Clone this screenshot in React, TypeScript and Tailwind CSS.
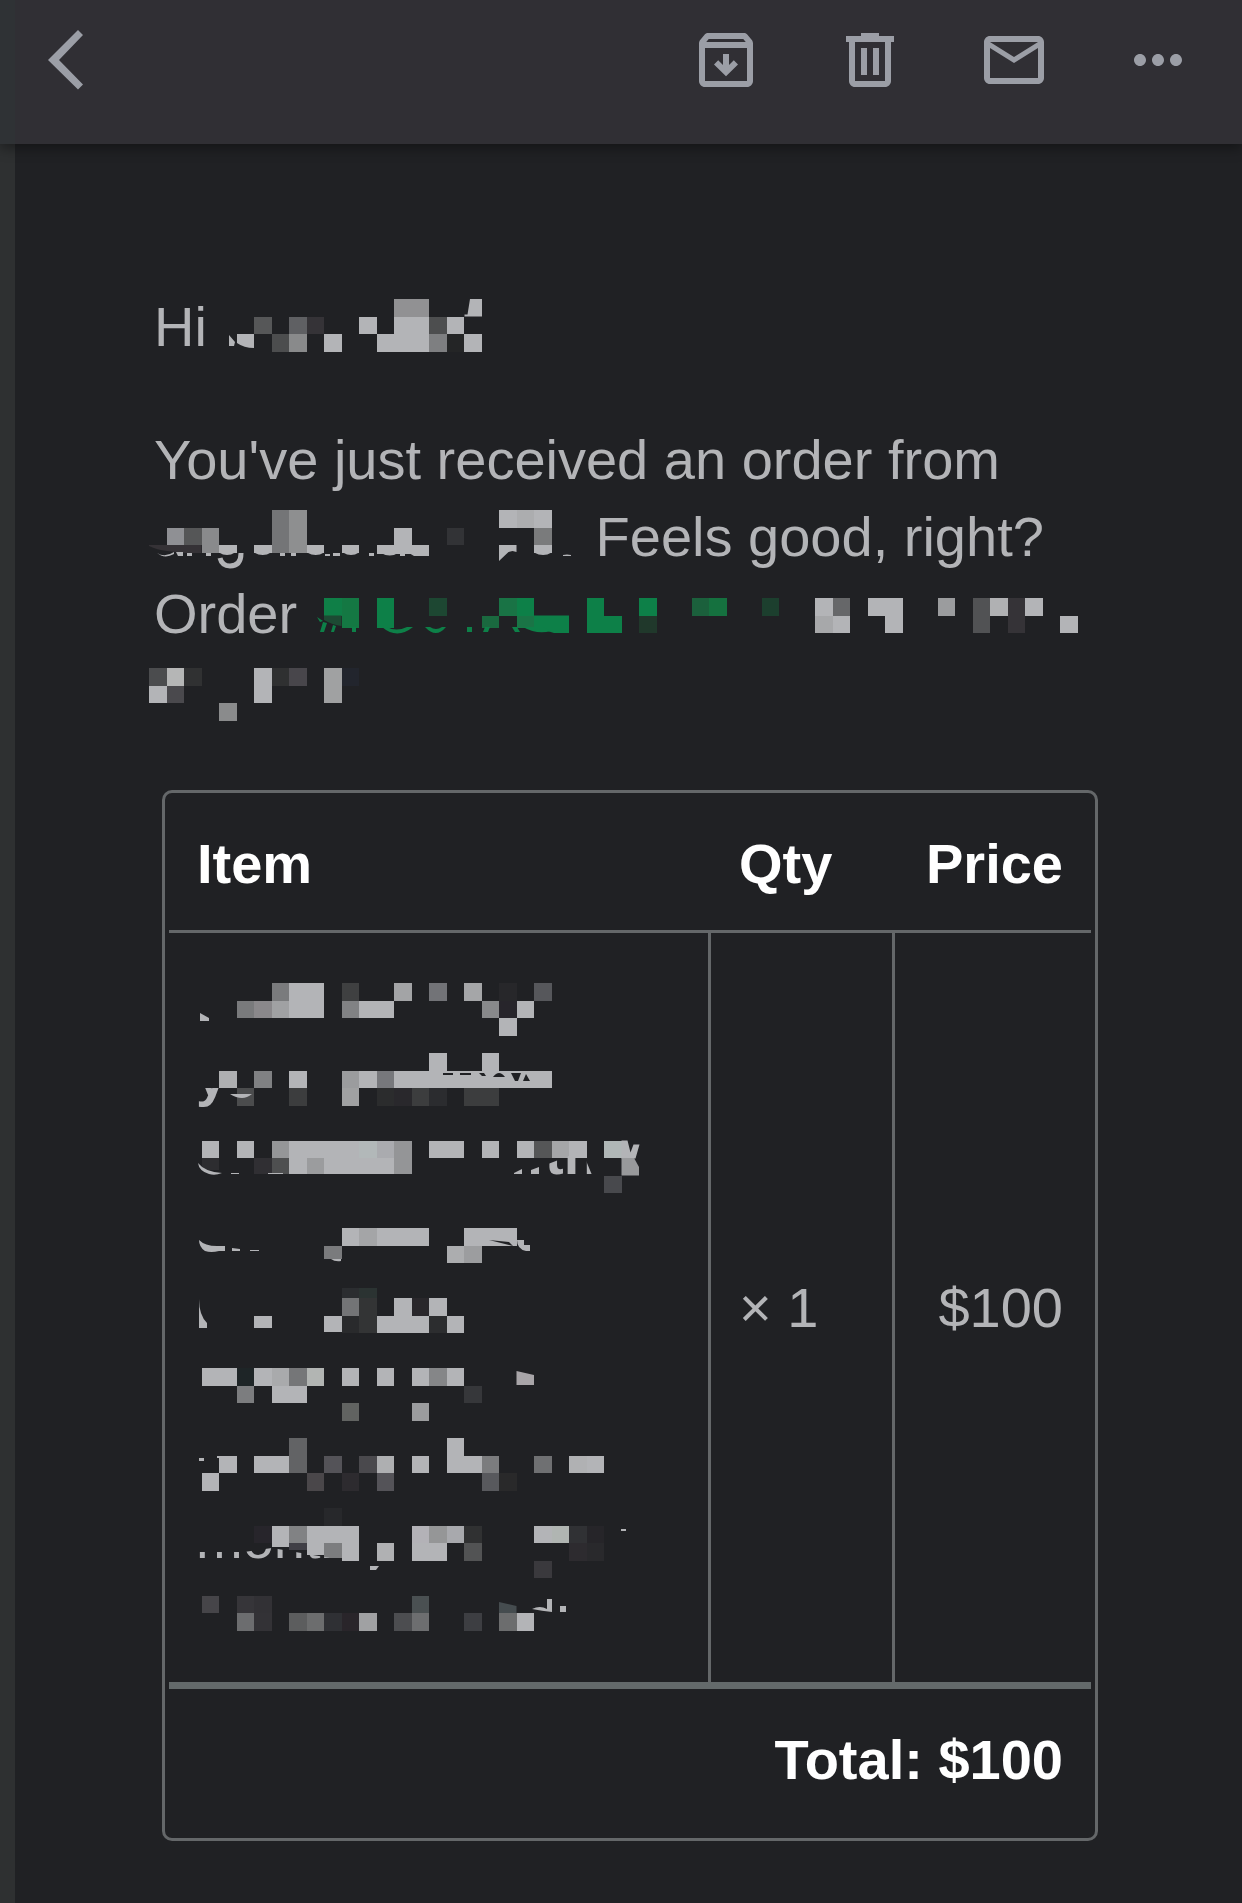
import type { ReactNode } from "react";

const CELL = 17.5;
const LIGHT = "#b3b4b7";
const GREEN = "#0d8048";

// column, row, colour, columns wide, rows high
type Cell = [number, number, string?, number?, number?];

interface MosaicProps {
	label: string;
	cells: Cell[];
	x: number;
	y: number;
	width: number;
	height?: number;
	block?: boolean;
	children?: ReactNode;
}

const Mosaic = ({ label, cells, x, y, width, height = 48, block, children }: MosaicProps) => (
	<svg
		role="img"
		aria-label={label}
		width={width}
		height={height}
		viewBox={`${x} ${y} ${width} ${height}`}
		className={block ? "block overflow-visible" : "inline align-baseline overflow-visible"}
	>
		{cells.map(([col, row, color = LIGHT, w = 1, h = 1]) => (
			<rect
				key={`${col}-${row}`}
				x={col * CELL}
				y={row * CELL}
				width={w * CELL}
				height={h * CELL}
				fill={color}
				shapeRendering="crispEdges"
			/>
		))}
		{children}
	</svg>
);

const nameCells: Cell[] = [
	[14, 0, "#919193", 2],
	[6, 1, "#565758"], [8, 1, "#5f6063"], [9, 1, "#353337"], [12, 1], [14, 1, LIGHT, 2, 2],
	[16, 1, "#4d4e4f"], [17, 1],
	[7, 2, "#4c4d4e"], [8, 2, "#898a8b"], [10, 2], [13, 2], [16, 2, "#7e7f81"],
	[17, 2, "#242526"], [18, 2],
];

const customerCells: Cell[] = [
	[7, 0, "#747577", 1, 2.45], [8, 0, "#8e8f90", 1, 2.45], [20, 0], [21, 0, "#acadaf"], [22, 0],
	[1, 1, "#8f9094"], [2, 1, "#555657"], [3, 1, "#898a8c", 1, 1.45], [14, 1], [17, 1, "#323336"],
	[22, 1, "#7a7b7c"],
	[4, 2, LIGHT, 1, 0.45], [6, 2, LIGHT, 1, 0.45], [9, 2, LIGHT, 1, 0.45],
	[11, 2, LIGHT, 1, 0.45], [13, 2, LIGHT, 3, 0.5], [22, 2, LIGHT, 1, 0.45],
];

const orderCells: Cell[] = [
	[10, 0, "#0f7f47"], [11, 0, "#147843"], [13, 0, GREEN, 1, 1.7], [16, 0, "#1d4732"],
	[20, 0, "#197345"], [21, 0, GREEN], [25, 0, GREEN, 1, 2], [28, 0, GREEN],
	[31, 0, "#1b603c"], [32, 0, "#15713f"], [35, 0, "#1c3f2e"],
	[11, 1, "#147843", 1, 0.7], [19, 1, "#1a693f", 1, 0.7], [21, 1, "#1a7446", 1, 0.7],
	[26, 1, GREEN], [28, 1, "#20382b"],
];

const dateCells: Cell[] = [
	[38, 0], [39, 0, "#666769"], [41, 0, LIGHT, 2], [45, 0, "#9b9c9e"],
	[47, 0, "#515254", 1, 2], [48, 0, "#b0b1b3"], [49, 0, "#353337", 1, 2], [50, 0],
	[38, 1, "#a7a8aa"], [39, 1], [42, 1], [52, 1],
];

const yearCells: Cell[] = [
	[0, 0, "#4b4c4e"], [1, 0, "#b5b6b6"], [2, 0, "#303132"], [6, 0, LIGHT, 1, 2],
	[7, 0, "#2f3031"], [8, 0, "#48464b"], [10, 0, "#a0a1a2", 1, 2], [11, 0, "#22252d"],
	[0, 1], [1, 1, "#4a494d"],
	[4, 2, "#8a8b8c"],
];

const itemCells: Cell[] = [
	[7, 0, "#7a7b7d"], [8, 0, LIGHT, 2, 2], [11, 0, "#3f4041"], [14, 0, "#a3a4a6"],
	[16, 0, "#727377"], [18, 0, "#a5a6a8"], [20, 0, "#27272a"], [22, 0, "#56575b"],
	[5, 1, "#797a7c"], [6, 1, "#8a888b"], [7, 1, "#a0a1a3"], [11, 1, "#818284"],
	[12, 1, LIGHT, 2], [19, 1, "#88898b"], [20, 1, "#27252b"], [21, 1],
	[20, 2],
	[16, 4], [19, 4],
	[4, 5, "#aeafb1"], [6, 5, "#808183"], [8, 5], [11, 5, "#9b9c9e"], [12, 5],
	[13, 5, "#77787c"], [14, 5, LIGHT, 9],
	[5, 6, "#4b4c4d"], [8, 6, "#3c3d3e"], [11, 6, "#a0a1a2"], [13, 6, "#2b2c2d"],
	[14, 6, "#29282c"], [15, 6, "#3c3d3e"], [16, 6, "#2b2c2f"], [18, 6, "#3c3d3e", 2],
	[3, 9], [5, 9], [7, 9, "#959698"], [8, 9, LIGHT, 4], [12, 9, "#b2b8b9"],
	[13, 9, "#aaabaf"], [14, 9, "#949597", 1, 1.9], [16, 9, LIGHT, 2], [19, 9], [21, 9],
	[22, 9, "#555657"], [23, 9, "#a5a6a8"], [24, 9], [26, 9, "#b0b7b7"],
	[3, 10, "#2d2d30", 1, 0.7], [6, 10, "#302f33", 1, 0.9], [7, 10, "#4e4f50", 1, 0.9],
	[8, 10, LIGHT, 1, 0.9], [9, 10, "#9b9c9e", 1, 0.9], [10, 10, LIGHT, 4, 0.9],
	[26, 11, "#48494d"],
	[11, 14], [12, 14, "#a4a5a7"], [13, 14, LIGHT, 3], [18, 14, LIGHT, 3],
	[10, 15, "#7a7b7d", 1, 0.75], [17, 15, "#acadaf"], [18, 15, "#9c9d9f"],
	[11, 17.4, "#2b2d30", 1, 0.6], [12, 17.4, "#2b3332", 1, 0.6],
	[11, 18, "#737476"], [12, 18, "#333435", 1, 2], [14, 18], [15, 18, "#29272b"], [16, 18],
	[6, 19, LIGHT, 1, 0.7], [10, 19, LIGHT, 1, 0.95], [11, 19, "#292a2c"],
	[13, 19, LIGHT, 3], [16, 19, "#2c2d2f"], [17, 19],
	[3, 22, LIGHT, 2], [5, 22, "#1e2527"], [6, 22], [7, 22, "#a9aaac"], [8, 22, "#757678"],
	[9, 22, "#b2b5b3"], [11, 22], [13, 22], [15, 22], [16, 22, "#858688"], [17, 22],
	[5, 23, "#7c7d7f"], [7, 23, LIGHT, 2], [18, 23, "#36373a"],
	[11, 24, "#616361"], [15, 24, "#9b9c9e"],
	[8, 26, "#626365", 1, 2], [17, 26, LIGHT, 1, 2],
	[4, 27], [6, 27, LIGHT, 2], [10, 27, "#545358"], [12, 27, "#4a494d"], [13, 27, "#aeafb1"],
	[15, 27], [18, 27], [19, 27, "#7b7c7e"], [22, 27, "#6f7072"], [24, 27, "#b0b1b3"], [25, 27],
	[3, 28], [9, 28, "#4a474a"], [11, 28, "#2d2b2f"], [13, 28, "#545358"],
	[19, 28, "#58595d"], [20, 28, "#29292a"],
	[10, 30, "#27282b"],
	[6, 31, "#27252b"], [7, 31, LIGHT, 1, 1.25], [8, 31, "#818284"], [9, 31, LIGHT, 3],
	[15, 31, "#b3b2b7"], [16, 31, "#959697"], [17, 31, "#a8a9ad"], [18, 31, "#303132"],
	[22, 31], [23, 31, "#b0b5b2"], [24, 31, "#303134"], [25, 31, "#262529"],
	[8, 32, "#403f46", 1, 0.4], [9, 32, LIGHT, 1, 0.7], [10, 32, "#7c7d7f", 1, 0.85], [11, 32],
	[13, 32, "#b0b1b3"], [15, 32, LIGHT, 2], [18, 32, "#525354"], [24, 32, "#2d2b2f"],
	[25, 32, "#29292c"],
	[22, 33, "#3a393d"],
	[3, 35, "#464549"], [5, 35, "#363539"], [6, 35, "#323135"], [15, 35, "#4a5052"],
	[5, 36, "#6c6d6f"], [6, 36, "#333236"], [8, 36, "#5c5d5e"], [9, 36, "#6c6d6e"],
	[10, 36, "#2f3034"], [11, 36, "#29252a"], [12, 36, "#a0a1a3"], [14, 36, "#4c4d50"],
	[15, 36, "#6d6e70"], [18, 36, "#3d3e42"], [20, 36, "#6c6d6e"], [21, 36],
];

const ItemName = () => (
	<Mosaic label="Hidden item name" cells={itemCells} x={48} y={-22} width={484} height={693} block>
		<clipPath id="item-line-2">
			<path d="M47 105h24v26H47z" />
		</clipPath>
		<clipPath id="item-line-3">
			<path d="M399 181l34-13 10 24h-44z" />
		</clipPath>
		<clipPath id="item-line-8">
			<path d="M47 569h48l28-4 76 13H47z" />
		</clipPath>
		<g fill={LIGHT}>
			<path d="M51 30l9 5v3h-9z" />
			<path d="M81 111h22q-5 4-10 4-6 0-12-4z" />
			<path d="M49 180q7 9 24 10-7 3-13 1-10-3-11-11z" />
			<path d="M82 190h8v1h-8zM119 190h15v1h-15zM365 190l8-4v5h-8zM382 187l8-3v7h-8z" />
			<path d="M472.5 157.5h6l3 12 3-8h6l-4 14h-14z" />
			<path d="M472.5 175H485l5 9v8.500h-17.500z" fill="#98999b" />
			<path d="M50 257q6 6 18 6h8v5h-6q-8 2-14 0-6-4-6-11zM83 265l8 1v2h-8zM101 267h9v1h-9z" />
			<path d="M182 276h10v2q-6 1-10-2z" />
			<path d="M368 257h7v5h6v6h-4q-9-2-9-11z" />
			<path d="M50 316q0 16 8 24v5h-8z" />
			<path d="M367.500 388l17.500 4v10h-17.500z" fill="#a8a5a8" />
			<path d="M50 475h5v3h-5zM68 473h18v2H68z" />
			<path d="M472 546h5v2h-5zM221 583h9l-3 4h-6z" />
			<path d="M350 619l17.500 4v7H350z" fill="#454c4f" />
			<path d="M383 626q8-4 15 0v-10h5v13q-10-1-20-3zM411 623h6v6h-6z" />
		</g>
		<g fill="#202124">
			<path d="M294 90h10v2h-10zM311 90h11v2h-11zM330 90h5l2 3h-4zM344 94q6-8 12 0zM362 90h10l-3 8h-3zM374 98l3-7 4 7z" />
			<path d="M340 257l20 2 4 4z" />
		</g>
		<g fill={LIGHT} fontSize={56}>
			<text x={47} y={112} fontWeight={700} clipPath="url(#item-line-2)">y</text>
			<text x={396} y={191} fontWeight={700} clipPath="url(#item-line-3)">th</text>
			<text x={47} y={575} clipPath="url(#item-line-8)">month</text>
		</g>
	</Mosaic>
);

const toolbarActions = [
	{
		label: "Archive",
		path: "M20.54 5.23l-1.39-1.68C18.88 3.210 18.470 3 18 3H6c-.47 0-.88.21-1.16.55L3.460 5.230C3.170 5.570 3 6.020 3 6.500V19c0 1.100.9 2 2 2h14c1.100 0 2-.9 2-2V6.500c0-.48-.17-.93-.46-1.270zM6.240 5h11.520l.83 1H5.420l.82-1zM5 19V8h14v11H5zm8-9h-2v3.700l-1.600-1.600L8 13.500l4 3.900 4-3.900-1.400-1.400-1.600 1.600z",
	},
	{
		label: "Delete",
		path: "M15 4V3H9v1H4v2h1v13c0 1.100.9 2 2 2h10c1.100 0 2-.9 2-2V6h1V4h-5zm2 15H7V6h10v13zM9 8h2v9H9zm4 0h2v9h-2z",
	},
	{
		label: "Mark as unread",
		path: "M20 4H4c-1.100 0-2 .9-2 2v12c0 1.100.9 2 2 2h16c1.100 0 2-.9 2-2V6c0-1.100-.9-2-2-2zm0 14H4V8l8 5 8-5v10zm-8-7L4 6h16l-8 5z",
	},
	{
		label: "More options",
		path: "M6 10c-1.100 0-2 .9-2 2s.9 2 2 2 2-.9 2-2-.9-2-2-2zm12 0c-1.100 0-2 .9-2 2s.9 2 2 2 2-.9 2-2-.9-2-2-2zm-6 0c-1.100 0-2 .9-2 2s.9 2 2 2 2-.9 2-2-.9-2-2-2z",
	},
];

const Toolbar = () => (
	<header className="relative z-10 flex items-center justify-between border-l-[15px] border-[#2f3235] bg-[#302f34] pt-6 pr-12 pb-12 pl-[33px] text-[#9b9ea6] shadow-[0_4px_12px_rgba(0,0,0,0.4)]">
		<button type="button" aria-label="Back">
			<svg width={36} height={60} viewBox="0 0 36 60" fill="currentColor">
				<path d="M30 0l5 5-24 25 24 24.500-5 5L0 30z" />
			</svg>
		</button>
		<div className="flex gap-[72px]">
			{toolbarActions.map(({ label, path }) => (
				<button key={label} type="button" aria-label={label}>
					<svg width={72} height={72} viewBox="0 0 24 24" fill="currentColor">
						<path d={path} />
					</svg>
				</button>
			))}
		</div>
	</header>
);

const OrderTable = () => (
	<table className="w-full table-fixed border-separate border-spacing-0 rounded-[10px] border-[3px] border-[#646769] p-1">
		<thead className="text-white">
			<tr>
				<th className="border-b-[3px] border-[#646769] p-7 text-left font-bold">Item</th>
				<th className="w-[184px] border-b-[3px] border-[#646769] p-7 text-left font-bold">Qty</th>
				<th className="w-[196px] border-b-[3px] border-[#646769] p-7 text-right font-bold">Price</th>
			</tr>
		</thead>
		<tbody>
			<tr>
				<td className="border-r-[3px] border-[#646769] p-7">
					<ItemName />
				</td>
				<td className="border-r-[3px] border-[#646769] p-7">× 1</td>
				<td className="p-7 text-right">$100</td>
			</tr>
		</tbody>
		<tfoot className="text-white">
			<tr>
				<td colSpan={3} className="border-t-[7px] border-[#646a6b] px-7 pt-8 pb-9 text-right font-bold">
					Total: $100
				</td>
			</tr>
		</tfoot>
	</table>
);

export default function App() {
	return (
		<div className="flex min-h-screen flex-col bg-[#202124] font-['Liberation_Sans',Arial,sans-serif] text-[56px] leading-[77px] text-[#b3b4b7]">
			<Toolbar />
			<main className="grow border-l-[15px] border-[#2e3031] pt-36 pr-[136px] pb-14 pl-[139px]">
				<p>
					Hi{" "}
					<Mosaic label="Hidden name" cells={nameCells} x={73} y={-1} width={280}>
						<g fill={LIGHT}>
							<path d="M321 0h12v17.500h-17.500v-2h3z" />
							<path d="M80 36l6 7-1 4h-5zM88 35h17v14q-10 0-17-5z" />
						</g>
					</Mosaic>
				</p>
				<p className="mt-14">
					You've just received an order from{" "}
					<Mosaic label="Hidden customer" cells={customerCells} x={5} y={-2} width={426}>
						<path d="M0 35h52.500v8H36l-18-2q-10-1-18-5z" fill="#353236" />
						<g fill={LIGHT}>
							<path d="M8 43q8 5 17-1v2q-7 4-13 1.500zM27 42h7v4h-5zM38 43h5v3h-5zM57 43h5v3h-5z" />
							<path d="M70 42.500h16q-8 5-16 0zM105 42.500h17q-8 5-17 0zM131 43h5v3h-5zM142 43h5v3h-5z" />
							<path d="M158 42.500h17q-8 5-17 0zM176 44h5v2h-5zM184 43h7v3h-7zM194 42.500h16q-8 5-16 0z" />
							<path d="M220 43h5v3h-5zM232 43h17q-8 5-17 0zM251 43h5v3h-5zM260 43h20v3h-15z" />
							<path d="M350 35h17.500v7l-4-1-4 1-9.500 9zM385 42.500h17.500q-8 5-17.500 0zM414 45q4-1 8 0v1h-8z" />
						</g>
						<path d="M71 48q2 8 10 8 11 0 11-13" fill="none" stroke={LIGHT} strokeWidth={5} />
					</Mosaic>{" "}
					Feels good, right? Order{" "}
					<a href="#order">
						<Mosaic label="Hidden order number" cells={orderCells} x={164} y={-13} width={470}>
							<path d="M175 17.500h17.500V28q-9-1-17.500-6z" fill="#1d4a33" />
							<g fill={GREEN}>
								<path d="M385 17.500h35V35h-15l-20-6z" />
								<path d="M168 19l6 4-3 1zM174 24l4 1-3 9h-4zM184 27l3 1-2 6h-3zM203 29h4v5h-4z" />
								<path d="M233 29h5q9 5 20 0h6q-16 13-31 0zM276 29h5q6 4 12 0h4q-10 12-21 0zM318 29h5v5h-5z" />
								<path d="M336 29h5l-2 5h-5zM363 29h5l3 5h-5zM374 29h20l8 4q-14 4-28-4z" />
							</g>
						</Mosaic>
					</a>{" "}
					<Mosaic label="Hidden date" cells={dateCells} x={648} y={-13} width={280} />{" "}
					<Mosaic label="Hidden year" cells={yearCells} x={5} y={-6} width={200} />
				</p>
				<div className="mx-2 mt-[61px]">
					<OrderTable />
				</div>
			</main>
		</div>
	);
}
